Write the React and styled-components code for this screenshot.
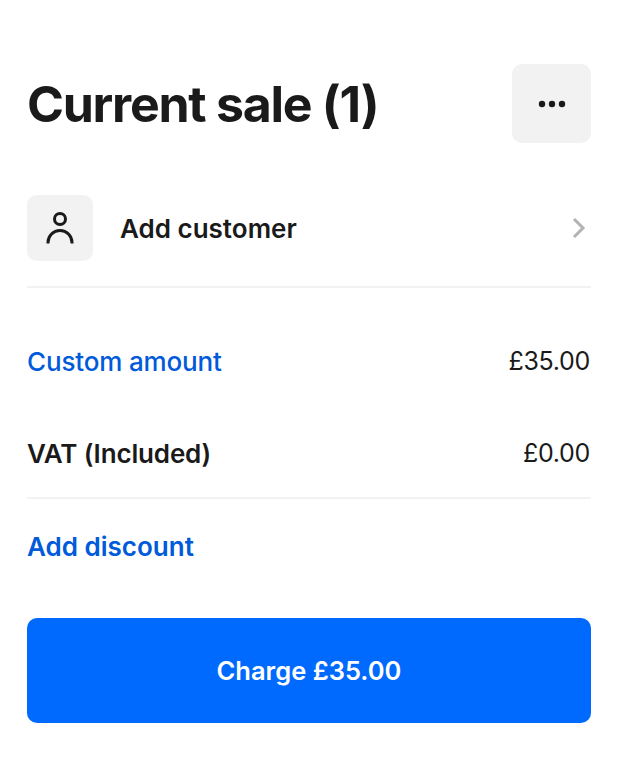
import React from 'react';
import styled, { createGlobalStyle } from 'styled-components';

const Global = createGlobalStyle`
  html, body { margin: 0; background: #fff; }
  * { box-sizing: border-box; }
`;

const Page = styled.div`
  width: 617px;
  height: 776px;
  padding: 64px 26px 0 27px;
  font-family: Inter, "Liberation Sans", sans-serif;
  color: #1a1a1a;
  overflow: hidden;
`;

const Header = styled.header`
  display: flex;
  align-items: center;
  justify-content: space-between;
  margin-bottom: 52px;
`;

const Title = styled.h1`
  margin: 0;
  font-size: 50px;
  font-weight: 700;
  letter-spacing: -1.26px;
`;

const MoreButton = styled.button`
  width: 79px;
  height: 79px;
  border: 0;
  border-radius: 10px;
  background: #f2f2f2;
  display: flex;
  align-items: center;
  justify-content: center;
  color: #1a1a1a;
`;

const CustomerRow = styled.div`
  display: flex;
  align-items: center;
  gap: 27px;
  padding-bottom: 25px;
  border-bottom: 2px solid #f2f2f2;
`;

const Avatar = styled.div`
  width: 66px;
  height: 66px;
  border-radius: 10px;
  background: #f2f2f2;
  display: flex;
  align-items: center;
  justify-content: center;
`;

const CustomerLabel = styled.span`
  flex: 1;
  padding-top: 1px;
  font-size: 26px;
  font-weight: 600;
`;

const Chevron = styled.svg`
  margin-right: 5px;
`;

const Line = styled.div`
  display: flex;
  align-items: center;
  justify-content: space-between;
  height: 32px;
  margin-top: ${(p) => p.$top}px;
`;

const LineLabel = styled.span`
  font-size: 26px;
  font-weight: ${(p) => p.$weight || 600};
  letter-spacing: ${(p) => p.$tracking || 0}px;
  color: ${(p) => (p.$link ? '#005ad9' : '#1a1a1a')};
`;

const LineValue = styled.span`
  padding-right: 1px;
  font-size: 25px;
  font-weight: 400;
  letter-spacing: -0.3px;
`;

const Divider = styled.hr`
  margin: 28px 0 0;
  border: 0;
  height: 2px;
  background: #f2f2f2;
`;

const Charge = styled.button`
  display: block;
  width: 100%;
  height: 105px;
  margin-top: 56px;
  border: 0;
  border-radius: 10px;
  background: #006aff;
  color: #fff;
  font-family: inherit;
  font-size: 25.5px;
  font-weight: 600;
`;

export default function App() {
  return (
    <Page>
      <Global />
      <Header>
        <Title>Current sale (1)</Title>
        <MoreButton aria-label="More">
          <svg width="28" height="8" viewBox="0 0 28 8" fill="currentColor">
            <circle cx="4" cy="4" r="3.2" />
            <circle cx="14" cy="4" r="3.2" />
            <circle cx="24" cy="4" r="3.2" />
          </svg>
        </MoreButton>
      </Header>
      <CustomerRow>
        <Avatar>
          <svg width="30" height="32" viewBox="0 0 30 32" fill="none" stroke="#1a1a1a" strokeWidth="3">
            <circle cx="15" cy="7" r="5.5" />
            <path d="M3 31.5v-1a12 12 0 0 1 24 0v1" />
          </svg>
        </Avatar>
        <CustomerLabel>Add customer</CustomerLabel>
        <Chevron width="14" height="22" viewBox="0 0 14 22" fill="none" stroke="#b3b3b3" strokeWidth="3">
          <path d="M2 2l9 9-9 9" />
        </Chevron>
      </CustomerRow>
      <Line $top={57}>
        <LineLabel $link $weight={500} $tracking={-0.15}>Custom amount</LineLabel>
        <LineValue>£35.00</LineValue>
      </Line>
      <Line $top={60}>
        <LineLabel $tracking={-0.15}>VAT (Included)</LineLabel>
        <LineValue>£0.00</LineValue>
      </Line>
      <Divider />
      <Line $top={31}>
        <LineLabel $link>Add discount</LineLabel>
      </Line>
      <Charge>Charge £35.00</Charge>
    </Page>
  );
}
